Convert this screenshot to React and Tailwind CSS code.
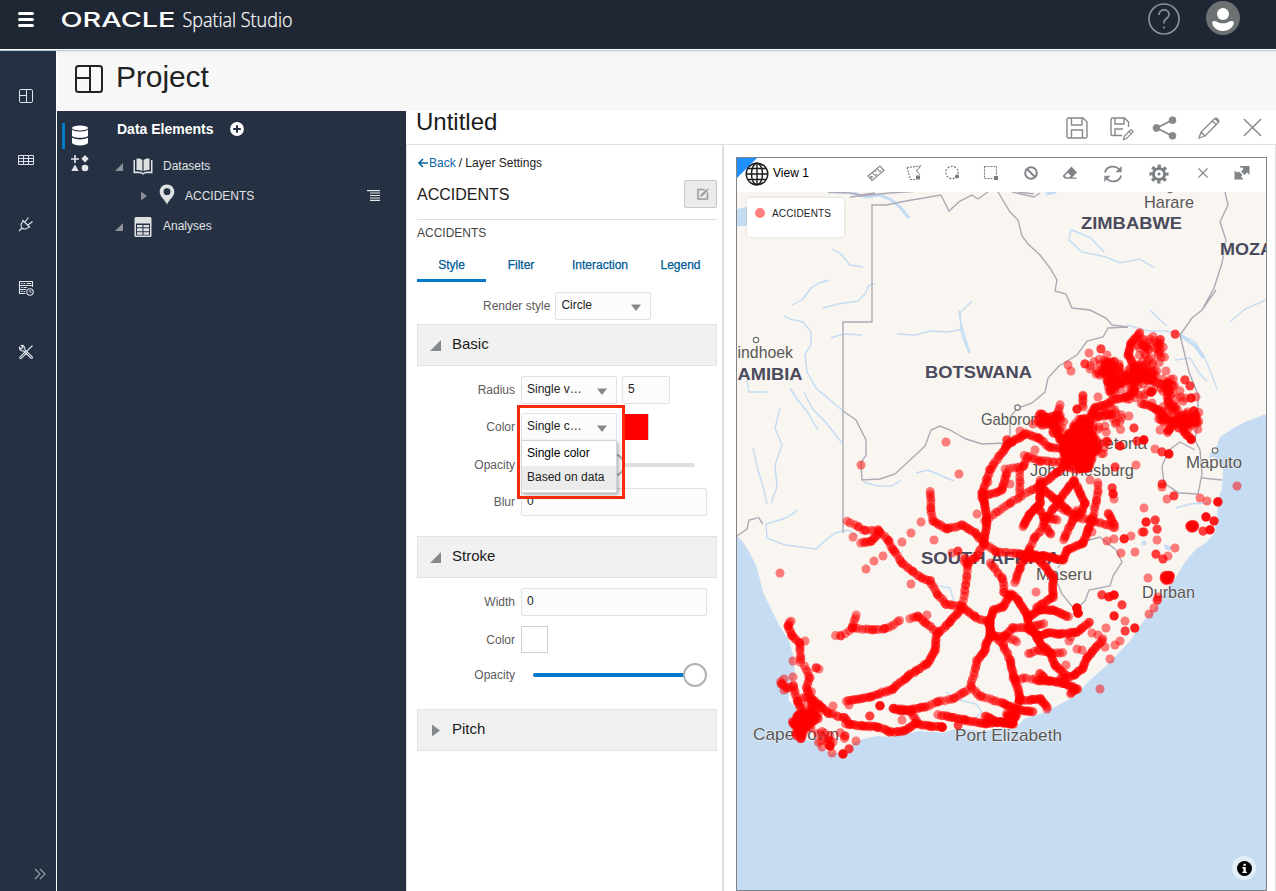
import React from "react";

/* ---------- icons ---------- */

function LayoutIcon({ className, sw }) {
  return (
    <svg viewBox="0 0 28 28" className={className} fill="none" stroke="currentColor" strokeWidth={sw}>
      <rect x="1" y="1" width="26" height="26" rx="2.5" />
      <path d="M15 1V27M1 13H15" />
    </svg>
  );
}

function TableIcon() {
  return (
    <svg viewBox="0 0 16 10" className="h-[10px] w-4" fill="none" stroke="#dfe4ea" strokeWidth="1">
      <path d="M.5 .5H15.500V9.500H.5ZM.5 3.500H15.500M.5 6.500H15.500M5.500 .5V9.500M10.500 .5V9.500" />
    </svg>
  );
}

function PlugIcon() {
  return (
    <svg viewBox="0 0 16 16" className="h-4 w-4" fill="none" stroke="#dfe4ea" strokeWidth="1.1">
      <path d="M1 15L4 12M4 12C2 10 3 7 5.500 5L11 10.500C9 13 6 14 4 12ZM4.500 4L12 11.500M7 6L10.500 1.500M10 9L14.500 5.500" />
    </svg>
  );
}

function ServerClockIcon() {
  return (
    <svg viewBox="0 0 16 16" className="h-4 w-4" fill="none" stroke="#dfe4ea" strokeWidth="1.100">
      <path d="M7.500 13.500H1.500V1.500H14.500V7M1.500 5.500H14.500M1.500 9.500H8" />
      <path d="M3 3.500H4.500M5.500 3.500H7M8.500 3.500H13M3 7.500H4.500M5.500 7.500H9M3 11.500H4.500M5.500 11.500H7" />
      <circle cx="12" cy="12" r="3.2" />
      <path d="M12 10V12.200H13.600" strokeWidth="0.9" />
    </svg>
  );
}

function ToolsIcon() {
  return (
    <svg viewBox="0 0 16 16" className="h-4 w-4" fill="none" stroke="#dfe4ea" strokeWidth="1.1">
      <path d="M14.500 1.500L8.500 7.500M8 7L2 13C1.300 14 2.500 15 3.300 14.300L9 8.600M5.600 6.800L12.800 14C13.800 14.800 15 13.600 14.200 12.800L6.800 5.600C7.300 3.300 5.600 1 3.300 1.500L5 3.300L3.300 5L1.500 3.300C1 5.500 3 7.500 5.600 6.800Z" />
    </svg>
  );
}

function DatabaseIcon() {
  return (
    <svg viewBox="0 0 18 21" className="-mt-0.5 h-[21px] w-[18px]" fill="#fff">
      <ellipse cx="9" cy="3" rx="8" ry="2.600" />
      <path d="M1 4.500C3 7.200 15 7.200 17 4.500V11C15 13.400 3 13.400 1 11Z" />
      <path d="M1 12.600C3 15 15 15 17 12.600V18C15 21.300 3 21.300 1 18Z" />
    </svg>
  );
}

function ShapesIcon() {
  return (
    <svg viewBox="0 0 18 18" className="h-[18px] w-[18px]" fill="#e3e5e8">
      <path d="M3.200 1H4.800V4.200H8V5.800H4.800V9H3.200V5.800H0V4.200H3.200ZM14 1L17.700 4.700L14 8.400L10.300 4.700ZM4 10.500L7.700 17H.3Z" />
      <circle cx="14" cy="14" r="3.3" />
    </svg>
  );
}

function PlusCircle() {
  return (
    <svg viewBox="0 0 14 14" className="h-[14px] w-[14px]">
      <circle cx="7" cy="7" r="6.900" fill="#fff" />
      <path d="M7 3.200V10.800M3.200 7H10.800" stroke="#253142" strokeWidth="2" />
    </svg>
  );
}

function BookIcon() {
  return (
    <svg viewBox="0 0 20 17" className="h-[17px] w-5" fill="#dfe0e2">
      <path d="M3.500 .5C6 .2 8.500 .8 9.400 2V13.200C8 12 5.500 11.800 3.500 12ZM16.500 .5C14 .2 11.500 .8 10.600 2V13.200C12 12 14.500 11.800 16.500 12Z" />
      <path d="M.5 2H2V13.500C5 13.200 8 13.400 10 15C12 13.400 15 13.200 18 13.500V2H19.500V15.200H12.500L10 16.800L7.500 15.200H.5Z" />
    </svg>
  );
}

function PinIcon() {
  return (
    <svg viewBox="0 0 16 21" className="h-[21px] w-4" fill="#dfe0e2">
      <path fillRule="evenodd" d="M8 .5C3.800 .5 .7 3.700 .7 7.700C.7 12.500 5.500 15 8 20.500C10.500 15 15.300 12.500 15.300 7.700C15.300 3.700 12.200 .5 8 .5ZM8 4.300A3.400 3.400 0 1 1 8 11.100A3.400 3.400 0 1 1 8 4.300Z" />
    </svg>
  );
}

function CalcIcon() {
  return (
    <svg viewBox="0 0 18 20" className="h-5 w-[18px]">
      <rect x="0.5" y="0" width="17" height="20" rx="1.500" fill="#dfe0e2" />
      <path d="M2 6.500H16V18.500H2Z" fill="#253142" />
      <path d="M3 8H8.500V10.200H3ZM9.500 8H15V10.200H9.500ZM3 11.200H8.500V14.200H3ZM9.500 11.200H15V14.200H9.500ZM3 15.200H8.500V17.700H3ZM9.500 15.200H15V17.700H9.500Z" fill="#dfe0e2" />
    </svg>
  );
}

function OpenTri({ className, fill }) {
  return (
    <svg viewBox="0 0 10 10" className={className}>
      <path d="M10 0V10H0Z" fill={fill} />
    </svg>
  );
}

function ClosedTri({ className, fill }) {
  return (
    <svg viewBox="0 0 8 12" className={className}>
      <path d="M0 0L8 6L0 12Z" fill={fill} />
    </svg>
  );
}

function Caret() {
  return (
    <svg viewBox="0 0 10 7" className="mt-[2px] h-[7px] w-[10px]">
      <path d="M0 .5H10L5 7Z" fill="#85898c" />
    </svg>
  );
}

function SaveIcon() {
  return (
    <svg viewBox="0 0 22 22" className="h-[22px] w-[22px]" fill="none" stroke="#85898d" strokeWidth="1.400">
      <path d="M2.500 1H17L21 5V19.500Q21 21 19.500 21H2.500Q1 21 1 19.500V2.500Q1 1 2.500 1ZM5.500 1V8H16V1M5.500 21V13H16.500V21" />
    </svg>
  );
}

function SaveAsIcon() {
  return (
    <svg viewBox="0 0 24 24" className="h-6 w-6" fill="none" stroke="#85898d" strokeWidth="1.400">
      <path d="M12 18.500H2.500Q1 18.500 1 17V2.500Q1 1 2.500 1H14.500L18.500 5V10M5 1V7H14V1M5 18.500V12H13" />
      <path d="M13.500 22.500L14.500 19L20.500 13C21.300 12.200 23.600 14.300 22.700 15.200L16.800 21.300ZM19 14.500L21.200 16.700" strokeWidth="1.200" />
    </svg>
  );
}

function ShareIcon() {
  return (
    <svg viewBox="0 0 25 24" className="h-6 w-[25px]" fill="#85898d" stroke="#85898d">
      <path d="M4.500 12L20.500 4M4.500 12L20.500 20" strokeWidth="1.800" />
      <circle cx="4.500" cy="12" r="3.400" />
      <circle cx="20.500" cy="4.200" r="3.400" />
      <circle cx="20.500" cy="19.800" r="3.400" />
    </svg>
  );
}

function PencilIcon() {
  return (
    <svg viewBox="0 0 22 22" className="h-[22px] w-[22px]" fill="none" stroke="#85898d" strokeWidth="1.300">
      <path d="M1 21L3 15L16.500 1.800C18.500 0 22 3.500 20.200 5.500L7 19ZM3 15L7 19M14.500 4L18 7.500M17 1.500L20.500 5" />
    </svg>
  );
}

function CloseIcon({ className, sw }) {
  return (
    <svg viewBox="0 0 20 20" className={className} fill="none" stroke="#85898d" strokeWidth={sw}>
      <path d="M1 1L19 19M19 1L1 19" />
    </svg>
  );
}

function GlobeIcon() {
  return (
    <svg viewBox="0 0 24 24" className="-mt-[2px] h-6 w-6" fill="none" stroke="#1d1d1d" strokeWidth="1.400">
      <circle cx="12" cy="12" r="10.800" />
      <ellipse cx="12" cy="12" rx="5.500" ry="10.800" />
      <path d="M12 1V23M1 12H23M3 6.500H21M3 17.500H21" />
    </svg>
  );
}

function RulerIcon() {
  return (
    <svg viewBox="0 0 18 18" className="h-[18px] w-[18px]" fill="none" stroke="#85898d" strokeWidth="1.200">
      <path d="M1 12L13 2L17 6.500L5 16.500ZM5.500 8.500L7.300 10.700M8 6.500L9.200 8M10.300 4.600L12.100 6.800M12.300 8L14 6.500M7.500 12L10 10" />
      <circle cx="4.500" cy="13" r=".7" />
    </svg>
  );
}

function PolySelectIcon() {
  return (
    <svg viewBox="0 0 16 16" className="h-4 w-4" fill="none" stroke="#777b7e" strokeWidth="1.100">
      <path d="M1 2.500L14.500 1L10.500 6L14 9.500M1 2.500L4.500 14.500H9" strokeDasharray="2 1" />
      <path d="M10 10.500H14V14.500H10Z" fill="#777b7e" stroke="none" />
    </svg>
  );
}

function CircleSelectIcon() {
  return (
    <svg viewBox="0 0 16 16" className="h-4 w-4" fill="none" stroke="#777b7e" strokeWidth="1.200">
      <circle cx="8" cy="7.500" r="6.200" strokeDasharray="2 1.400" />
      <circle cx="13" cy="11.500" r="2.100" fill="#777b7e" stroke="none" />
    </svg>
  );
}

function RectSelectIcon() {
  return (
    <svg viewBox="0 0 16 16" className="h-4 w-4" fill="none" stroke="#777b7e" strokeWidth="1.100">
      <path d="M1.500 1.500H13.500V10M1.500 1.500V13.500H10" strokeDasharray="2 1" />
      <path d="M11 11H15V15H11Z" fill="#777b7e" stroke="none" />
    </svg>
  );
}

function BanIcon() {
  return (
    <svg viewBox="0 0 14 14" className="h-[14px] w-[14px]" fill="none" stroke="#808488" strokeWidth="2">
      <circle cx="7" cy="7" r="5.800" />
      <path d="M3 3L11 11" />
    </svg>
  );
}

function EraserIcon() {
  return (
    <svg viewBox="0 0 16 14" className="h-[14px] w-4" fill="#808488">
      <path d="M9.500 .5L15 6.500L10 11.500H14.500V12.800H3L.5 10Z" />
      <path d="M2.800 9.800L5.800 6.800L8.800 9.700L7.300 11.300H4.200Z" fill="#fff" />
    </svg>
  );
}

function RefreshIcon() {
  return (
    <svg viewBox="0 0 20 18" className="h-[18px] w-5" fill="none" stroke="#85898d" strokeWidth="1.800">
      <path d="M2 7.500C3 1 13 -.5 16.500 5M18 10.500C17 17 7 18.500 3.500 13" />
      <path d="M18.700 1V7.300H12.500ZM1.300 17V10.700H7.500Z" fill="#85898d" stroke="none" />
    </svg>
  );
}

function GearIcon() {
  return (
    <svg viewBox="-10 -10 20 20" className="h-5 w-5" fill="none" stroke="#7c8083">
      <circle r="5.600" strokeWidth="3" />
      <circle r="7.800" strokeWidth="3.600" strokeDasharray="3.060 3.066" strokeDashoffset="1.530" />
      <circle r="1.600" fill="#7c8083" stroke="none" />
    </svg>
  );
}

function ExpandIcon() {
  return (
    <svg viewBox="0 0 16 16" className="h-4 w-4" fill="#808488">
      <path d="M6 1H15.500V10L13 7.500L10.500 10L7 6.500L9.500 4L8.500 2.500H6ZM.5 5.500L3 7.500L5 6.500L8.500 10L7 11.500L9.500 14.500H.5Z" />
    </svg>
  );
}

/* ---------- map data ---------- */

// Each road: [spacing between points, vertices...]
const ROADS = [
  [4.2, "847,521 858,527 866,531 878,530"],
  [3, "878,530 888,540 893,549 902,563 912,571 922,578 930,581 938,595 946,604 961,606"],
  [2.6, "961,606 975,617 990,623"],
  [2.2, "861,543 872,541 879,532"],
  [3.6, "930,491 931,508 933,521"],
  [2.4, "933,521 947,529 962,525 975,533 984,543"],
  [3.2, "984,543 996,552 1020,554"],
  [3.8, "984,543 978,555 968,564 966,585 962,605"],
  [2.2, "962,608 950,622 937,634 935,650 928,663 908,676 893,689 870,697 846,701"],
  [4.5, "836,635 841,636 853,628"],
  [3.2, "856,615 852,628 872,630 885,629 900,621"],
  [3, "910,619 918,616 926,623 936,632"],
  [3, "791,621 788,626 792,636 800,643 801,663"],
  [3.6, "804,666 810,678 806,688 812,700 820,706"],
  [2, "812,698 812,712 802,722"],
  [2, "818,704 828,713"],
  [3, "828,713 845,718 850,724"],
  [2.1, "846,724 862,726 878,727 890,732 905,731 915,724 930,726 942,727"],
  [3, "780,682 787,688 793,685 797,700 802,712"],
  [2.2, "892,708 902,711 925,707"],
  [3.2, "925,707 938,702 955,698 967,690"],
  [3.8, "970,687 976,668 977,660"],
  [2.2, "977,661 985,650 986,643 992,634 988,620"],
  [3.4, "971,687 980,696 1003,703"],
  [1.6, "1003,703 1015,709 1033,712"],
  [3, "893,708 910,711 918,723"],
  [4, "937,715 947,716"],
  [2, "947,716 965,720 985,724 1000,722 1013,724"],
  [1.6, "985,716 998,722 1013,724 1006,714"],
  [3, "994,636 1003,645 1010,660"],
  [2, "1010,660 1015,680 1020,697 1018,704"],
  [3, "1018,700 1030,700"],
  [1.8, "1030,700 1040,699 1047,707"],
  [4, "1013,678 1035,679"],
  [1.6, "1037,681 1050,681 1063,683 1077,689 1070,694"],
  [1.8, "1040,673 1045,680"],
  [2, "1103,639 1087,658 1083,668 1075,675 1060,679"],
  [2, "1028,629 1040,636 1047,633 1060,634 1077,632 1090,622"],
  [2, "1032,630 1040,643 1050,652 1055,665 1065,675"],
  [3.2, "1028,654 1038,650 1050,653 1063,653"],
  [2.6, "990,635 1003,637 1013,628 1030,627 1044,624"],
  [3.2, "1005,636 1017,642"],
  [1.5, "990,620 990,637"],
  [2, "1010,593 1018,600 1027,615 1030,630"],
  [2, "1010,595 1003,607 993,610 990,623"],
  [3, "990,563 1003,579 1004,592 1010,597"],
  [1.8, "1027,618 1040,610 1053,610 1068,617"],
  [2, "1040,560 1053,577 1053,597 1036,608"],
  [1.5, "1020,554 1027,557 1045,556 1063,560"],
  [2.3, "1015,582 1020,568 1027,553"],
  [3.2, "1027,553 1035,538 1044,526"],
  [2, "1044,522 1058,502 1074,480"],
  [1.6, "1023,527 1030,514 1040,503 1040,480"],
  [2.3, "1038,507 1044,517 1057,520"],
  [3, "1051,534 1044,524"],
  [2, "1063,560 1067,550 1083,543 1088,530 1093,517"],
  [3.2, "1093,517 1097,500 1098,483"],
  [2.5, "1063,540 1072,522 1077,510"],
  [3, "1060,508 1077,517 1093,521 1113,527"],
  [2, "1108,513 1115,527"],
  [2, "1040,486 1056,500 1068,510"],
  [2, "1074,480 1085,503 1080,515"],
  [2, "1005,447 1013,441 1025,435"],
  [2.5, "1025,433 1038,438 1050,447 1067,450"],
  [2.6, "1007,445 990,470 982,493"],
  [1.6, "982,492 984,502"],
  [2, "984,500 987,523 984,541"],
  [2.4, "982,497 1002,490 1007,472"],
  [3.4, "1005,469 1023,467 1027,459"],
  [3.4, "1020,470 1020,493"],
  [3.6, "985,521 1010,503 1037,487"],
  [2.2, "1037,487 1057,473 1070,460"],
  [3, "1024,455 1040,461 1067,462"],
  [2, "1043,417 1055,427 1060,440 1075,445"],
  [2.6, "1060,405 1056,418"],
  [2.4, "1083,395 1083,407"],
  [2, "1090,418 1095,408 1110,403"],
  [2.6, "1110,401 1130,396 1135,388"],
  [2, "1095,417 1113,414"],
  [2, "1140,332 1131,344 1128,355"],
  [1.8, "1128,355 1135,368 1137,378"],
  [1.8, "1107,365 1115,382 1110,392"],
  [1.8, "1112,388 1135,375 1152,380"],
  [2.4, "1150,380 1167,386 1168,402 1178,410"],
  [2, "1141,403 1155,408 1162,414 1166,420"],
  [2, "1168,433 1172,422 1184,418"],
  [2, "1182,416 1184,432 1192,440"],
];

// Dense areas: cx, cy, rx, ry, number of points
const CLUSTERS = [
  [1080, 446, 18, 17, 260],
  [1083, 428, 10, 10, 70],
  [1077, 461, 15, 10, 80],
  [803, 722, 11, 9, 75],
  [799, 735, 5, 4, 14],
  [815, 716, 5, 5, 12],
  [807, 704, 10, 14, 14],
  [830, 737, 16, 9, 13],
  [1112, 372, 10, 12, 50],
  [1103, 367, 13, 10, 16],
  [1142, 373, 15, 10, 48],
  [1151, 350, 16, 16, 42],
  [1130, 388, 24, 13, 42],
  [1048, 420, 11, 7, 26],
  [1060, 428, 8, 13, 14],
  [1107, 420, 19, 14, 24],
  [1185, 420, 14, 10, 32],
  [1165, 414, 9, 9, 18],
  [1168, 386, 8, 10, 16],
  [1176, 400, 9, 14, 10],
  [1105, 447, 9, 8, 8],
  [1196, 420, 4, 12, 14],
  [1012, 717, 5, 6, 20],
  [1167, 578, 3.5, 3.5, 18],
  [1192, 526, 3, 2.5, 14],
  [1030, 555, 7, 5, 20],
  [970, 560, 7, 5, 7],
];

// Isolated points: x, y, how many are stacked
const POINTS = [
  [780, 573, 1], [861, 465, 1], [946, 442, 1], [959, 474, 1], [866, 569, 1], [874, 561, 1], [883, 556, 1],
  [902, 542, 1], [911, 533, 1], [921, 522, 1], [911, 584, 1], [934, 540, 1], [927, 615, 1], [853, 537, 1],
  [977, 514, 1], [1010, 484, 1], [988, 482, 1], [1175, 334, 2], [1068, 365, 1], [1071, 371, 1], [1089, 353, 1],
  [1085, 364, 2], [1101, 349, 2], [1107, 355, 1], [1090, 369, 1], [1166, 371, 1], [1185, 380, 2], [1190, 386, 2],
  [1185, 398, 1], [1191, 398, 3], [1196, 397, 1], [1194, 411, 3], [1191, 439, 3], [1168, 430, 2], [1160, 430, 1],
  [1155, 449, 1], [1162, 452, 2], [1169, 454, 4], [1144, 440, 4], [1137, 441, 2], [1120, 446, 3], [1134, 428, 2],
  [1129, 416, 1], [1115, 467, 2], [1136, 465, 1], [1090, 480, 1], [1112, 488, 2], [1113, 494, 3], [1114, 499, 1],
  [1144, 508, 1], [1162, 484, 2], [1162, 487, 1], [1174, 496, 2], [1167, 499, 1], [1200, 498, 1], [1207, 501, 1],
  [1218, 502, 4], [1237, 486, 1], [1206, 517, 4], [1214, 521, 3], [1210, 530, 4], [1203, 531, 2], [1146, 522, 3],
  [1155, 520, 2], [1144, 532, 2], [1142, 532, 1], [1157, 529, 2], [1157, 540, 1], [1124, 539, 3], [1131, 536, 1],
  [1114, 539, 1], [1107, 541, 1], [1121, 553, 1], [1135, 552, 1], [1156, 554, 2], [1163, 559, 2], [1168, 556, 1],
  [1175, 548, 1], [1148, 568 + 10, 1], [1170, 576, 4], [1102, 595, 2], [1109, 597, 3], [1114, 595, 4], [1122, 605, 2],
  [1114, 616, 3], [1125, 621, 1], [1125, 631, 2], [1135, 628, 3], [1106, 628, 1], [1120, 641, 1], [1115, 645, 1],
  [1105, 647, 1], [1110, 659, 1], [1100, 689, 1], [1149, 614, 1], [1154, 608, 1], [1157, 600, 2], [1158, 597, 1],
  [1077, 608, 6], [1078, 613, 6], [1092, 633, 1], [1098, 635, 1], [1069, 641, 1], [1071, 637, 1], [1077, 649, 1],
  [1082, 650, 1], [1066, 665, 1], [1036, 592, 1], [880, 706, 4], [870, 716, 2], [902, 720, 1], [942, 727, 5],
  [958, 725, 2], [793, 661, 1], [793, 677, 1], [784, 679, 1], [805, 641, 1], [816, 668, 2], [819, 669, 1],
  [833, 706, 1], [849, 705, 1], [843, 754, 4], [830, 746, 5], [856, 741, 1], [832, 753, 1], [849, 749, 2],
  [822, 747, 1], [845, 736, 2], [1047, 709, 1], [1035, 450, 1], [1020, 431, 1], [1033, 424, 1], [1040, 414, 2],
  [1077, 409, 3], [1098, 397, 1], [1007, 440, 2], [1152, 403, 1], [1151, 392, 4],
  [1050, 533, 1], [1092, 532, 1], [952, 553, 1], [958, 551, 2], [788, 626, 1], [781, 684, 1], [784, 690, 1],
];

function buildDots() {
  let seed = 7919;
  const rnd = () => {
    seed = (seed * 16807) % 2147483647;
    return seed / 2147483647;
  };
  const out = [];
  for (const [step, text] of ROADS) {
    const pts = text.split(" ").map((p) => p.split(",").map(Number));
    for (let i = 0; i < pts.length - 1; i++) {
      const [x1, y1] = pts[i];
      const [x2, y2] = pts[i + 1];
      const len = Math.hypot(x2 - x1, y2 - y1);
      const n = Math.max(1, Math.round(len / step));
      for (let k = 0; k <= n; k++) {
        const t = Math.min(1, Math.max(0, (k + (rnd() - 0.5) * 0.6) / n));
        out.push([x1 + (x2 - x1) * t + (rnd() - 0.5) * 1.2, y1 + (y2 - y1) * t + (rnd() - 0.5) * 1.2]);
      }
    }
  }
  for (const [cx, cy, rx, ry, n] of CLUSTERS) {
    for (let k = 0; k < n; k++) {
      const a = rnd() * Math.PI * 2;
      const r = Math.sqrt(rnd());
      out.push([cx + Math.cos(a) * r * rx, cy + Math.sin(a) * r * ry]);
    }
  }
  for (const [x, y, n] of POINTS) {
    for (let k = 0; k < n; k++) out.push([x + (k ? (rnd() - 0.5) * 0.8 : 0), y + (k ? (rnd() - 0.5) * 0.8 : 0)]);
  }
  return out;
}

const DOTS = buildDots();

const SEA =
  "M737 536L743 542L750 553L757 568L763 592L772 611L780 627L789 640L793 655L795 675L790 690L788 700L797 708L792 720L794 735L803 741L815 738L822 748L830 753L845 753L853 743L863 739L877 736L890 737L905 734L920 731L943 733L958 728L972 730L985 731L1003 728L1015 729L1024 719L1040 714L1053 708L1075 696L1090 680L1107 665L1130 641L1145 619L1156 606L1166 590L1175 579L1185 562L1196 549L1207 542L1215 532L1217 515L1218 500L1222 488L1223 470L1219 462L1213 456L1216 448L1220 437L1232 429L1245 422L1266 414V891H737Z";

const RIVERS = [
  "M832 249L841 254L850 265L863 267",
  "M829 280L819 283L811 288L803 299L792 305",
  "M823 308L838 304L858 301L865 294L869 285L875 284",
  "M831 338L843 334L862 335",
  "M784 316L790 319L803 322L811 332L811 345L805 354L807 372L816 388L830 400L843 411",
  "M897 334L915 335L930 331L948 332L963 329M972 301L960 313L961 323L965 338L970 353",
  "M790 388L797 399L808 413L818 430M804 392L812 408L828 425L842 443",
  "M780 408L775 428L782 445L775 465L777 487L771 503",
  "M753 448L758 470L764 490L767 504",
  "M747 380L749 392L767 392",
  "M798 510L786 518L766 524L767 538L785 545L816 549L826 540L835 533L848 530L858 536",
  "M863 482L878 486L892 486L901 480",
  "M916 473L928 470L942 476L954 481",
  "M940 586L950 588L954 601",
  "M946 692L960 700L976 704L982 712L974 719",
  "M1127 325L1148 331L1166 331L1180 334M1180 334L1195 342L1205 358L1213 378L1217 389",
  "M1150 310L1158 318L1167 326M1175 360L1190 358L1200 374L1207 381",
  "M959 310L962 335L969 353M1176 508L1190 504L1208 503",
  "M1071 229L1069 240L1082 252L1106 257L1120 263L1139 259L1155 268M1072 230L1091 238L1104 252",
  "M1230 322L1245 309L1266 300",
];

const BORDERS = [
  "M843 533V322H872V205L886 205L906 201L941 195L949 211L960 201L972 195L978 199L988 192",
  "M998 192L1010 212L1018 220L1022 236L1028 244L1040 255L1050 268L1057 280L1055 291L1066 294L1072 308L1090 310L1106 318L1112 325L1128 327",
  "M1128 327L1108 328L1103 337L1087 341L1077 355L1059 366L1048 378L1045 392L1032 403L1018 408L1010 417V435L1005 443L982 444L966 439L950 430",
  "M950 430L940 426L931 430L925 446L910 460L895 474L880 479L862 480L861 463L866 455L866 440L856 420L843 411",
  "M1180 335L1192 318L1202 310L1216 290M1225 192L1228 205L1220 222L1226 240L1222 263L1214 288L1202 310",
  "M1180 335L1189 372L1198 395L1198 422L1195 440L1200 450L1202 474L1198 494L1179 493L1164 483L1162 466L1169 450L1180 442L1195 450M1202 478L1222 480",
  "M1058 568L1068 552L1086 541L1100 537L1116 550L1122 562L1113 576L1110 586L1089 590L1085 601L1075 610L1062 594L1056 580L1046 562",
  "M737 536L747 529L749 520L757 518M758 517L763 524",
  "M828 192L849 193L860 195L875 193M1012 192L1034 197L1040 193M850 197L890 193L935 190M1018 192L1034 194",
];

const LABELS = [
  [1144, 207.5, "Harare", 50, false],
  [1081, 228.5, "ZIMBABWE", 101, true],
  [1220, 254.5, "MOZA", 53, true],
  [737.5, 357.5, "indhoek", 55.5, false],
  [737.5, 379.5, "AMIBIA", 65, true],
  [925, 377.5, "BOTSWANA", 107, true],
  [981, 424.5, "Gaborone", 66, false],
  [1087, 448.5, "Pretoria", 60, false],
  [1030, 475.5, "Johannesburg", 104, false],
  [1186, 467.5, "Maputo", 56, false],
  [921, 563.5, "SOUTH AFRICA", 139, true],
  [1036, 579.5, "Maseru", 56, false],
  [1142, 598, "Durban", 53, false],
  [753, 740, "Cape Town", 86, false],
  [955, 741, "Port Elizabeth", 107, false],
];

function MapCanvas() {
  return (
    <svg viewBox="737 192 529 698" className="block h-[698px] w-[529px]" fontFamily="'Liberation Sans', Arial, sans-serif">
      <rect x="737" y="192" width="529" height="698" fill="#f9f6f1" />
      <path d={SEA} fill="#c5dcf2" />
      <path d="M737 209L747 207V226H737Z" fill="#c5dcf2" />
      <g fill="none" stroke="#c3dcf3" strokeWidth="1.400">
        {RIVERS.map((d) => <path key={d} d={d} />)}
        <path d="M829 192H850L866 197L880 195L890 199L900 207L909 218M1046 194L1056 192M1180 335L1195 346L1204 358" strokeWidth="3" />
      </g>
      <g fill="#c5dcf2">
        <circle cx="1144" cy="543" r="2.500" />
        <path d="M1164 544L1172 547L1170 551L1165 549ZM1210 453L1215 450L1214 457L1209 458Z" />
      </g>
      <g fill="none" stroke="#aeaab5" strokeWidth="1.400">
        {BORDERS.map((d) => <path key={d} d={d} />)}
      </g>
      <g fill="#fff" stroke="#727270" strokeWidth="1.200">
        <circle cx="756" cy="340" r="2.700" />
        <circle cx="1017.500" cy="407.500" r="2.700" />
        <circle cx="1215" cy="450.500" r="2.700" />
        <circle cx="1170" cy="190" r="2.700" />
      </g>
      {LABELS.map(([x, y, text, w, bold]) => (
        <text
          key={text}
          x={x}
          y={y}
          textLength={w}
          lengthAdjust="spacingAndGlyphs"
          fontSize={17}
          fontWeight={bold ? 700 : 400}
          fill={bold ? "#4a4a5c" : "#585858"}
          stroke="#f9f6f1"
          strokeOpacity=".6"
          strokeWidth="1.500"
          paintOrder="stroke"
        >
          {text}
        </text>
      ))}
      <g fill="#ff0000" fillOpacity=".5">
        {DOTS.map(([x, y], i) => <circle key={i} cx={x} cy={y} r="4.500" />)}
      </g>
    </svg>
  );
}

/* ---------- settings form ---------- */

function Row({ label, className, children }) {
  return (
    <div className={"flex items-center " + className}>
      <div className="w-[98px] shrink-0 text-right text-[12px] text-[#5b5b5b]">{label}</div>
      <div className="relative ml-[6px] flex flex-1 items-center">{children}</div>
    </div>
  );
}

function Select({ value }) {
  return (
    <div className="flex h-7 w-24 items-center justify-between rounded-[2px] border border-[#dfe1e2] bg-[#fcfcfc] pl-[5px] pr-[9px]">
      <span className="-mt-0.5 text-[12px] text-[#222]">{value}</span>
      <Caret />
    </div>
  );
}

function TextField({ value, className }) {
  return (
    <div className={"flex h-7 items-center rounded-[2px] border border-[#dfe1e2] bg-[#fcfcfc] pl-[5px] " + className}>
      <span className="-mt-0.5 text-[12px] text-[#222]">{value}</span>
    </div>
  );
}

function Section({ title, open, className }) {
  return (
    <div className={"flex h-[42px] items-center border border-[#e0e2e3] bg-[#f1f1f1] pl-[11px] " + className}>
      <div className="flex w-[23px]">
        {open ? (
          <OpenTri className="ml-px h-[11px] w-[11px]" fill="#85898c" />
        ) : (
          <ClosedTri className="ml-[3px] h-[13px] w-2" fill="#85898c" />
        )}
      </div>
      <span className="-mt-0.5 text-[15px] text-[#1b1b1b]">{title}</span>
    </div>
  );
}

function SettingsPanel() {
  return (
    <section className="h-[747px] w-[318px] shrink-0 border-r-2 border-l border-[#dedede] bg-white pr-[5px] pl-[10px]">
      <div className="flex h-[35px] items-center text-[12px] text-[#1b1b1b]">
        <svg viewBox="0 0 10 10" className="mr-px ml-px h-[10px] w-[10px]" fill="none" stroke="#0a67a3" strokeWidth="1.600">
          <path d="M10 5H1.500M5 1L1 5L5 9" />
        </svg>
        <span className="text-[#0a67a3]">Back</span>
        <span className="ml-[3px]">/ Layer Settings</span>
      </div>
      <div className="flex h-[40px] items-start justify-between border-b border-[#dedede]">
        <h2 className="mt-[1px] text-[16px] leading-7 text-[#1b1b1b]">ACCIDENTS</h2>
        <div className="flex h-7 w-[33px] items-center justify-center rounded-[2px] border border-[#c6c8ca] bg-[#ebebeb] pl-[5px]">
          <svg viewBox="0 0 12 12" className="h-3 w-3" fill="none" stroke="#989a9c" strokeWidth="1.500">
            <path d="M7.500 1.500H1V11H10.500V4.500" />
            <path d="M3.500 8.500L4 6.800L9.300 1.500L10.500 2.700L5.200 8Z" fill="#989a9c" strokeWidth=".6" />
            <path d="M10.500 .8L11.300 1.600" />
          </svg>
        </div>
      </div>
      <div className="flex h-[27px] items-center pb-[2px] text-[12px] text-[#444]">ACCIDENTS</div>
      <div className="flex h-[35px] text-[12px] text-[#005a96] [-webkit-text-stroke:0.250px_#005a96]">
        <div className="w-[69px] border-b-3 border-[#007ac8] pt-[9px] text-center">Style</div>
        <div className="w-[70px] pt-[9px] text-center">Filter</div>
        <div className="w-[88px] pt-[9px] text-center">Interaction</div>
        <div className="w-[73px] pt-[9px] text-center">Legend</div>
      </div>
      <div className="mt-[10px] flex h-7 items-center gap-[5px] pl-[66px]">
        <span className="text-[12px] text-[#5b5b5b]">Render style</span>
        <Select value="Circle" />
      </div>
      <Section title="Basic" open className="mt-1" />
      <Row label="Radius" className="mt-[10px] h-7">
        <Select value="Single v…" />
        <TextField value="5" className="ml-[5px] w-12" />
      </Row>
      <Row label="Color" className="mt-[9px] h-7">
        <Select value="Single c…" />
        <div className="ml-[5px] h-[26px] w-[27px] border-r border-[#ccc] bg-[#ff0000]" />
        <div className="absolute top-[27px] left-0 z-10 w-24 border border-[#d2d4d6] bg-white pb-[2px] text-[12px] text-[#222] shadow-[2px_2px_4px_rgba(0,0,0,0.3)]">
          <div className="flex h-[25px] items-center pb-[2px] pl-[5px] text-black">Single color</div>
          <div className="flex h-6 items-center bg-[#ececec] pb-[2px] pl-[5px]">Based on data</div>
        </div>
        <div className="absolute -top-[8px] -left-1 z-20 h-[94px] w-[108px] border-[3px] border-[#fb2b0b]" />
      </Row>
      <Row label="Opacity" className="mt-[10px] h-7">
        <div className="ml-3 h-1 w-[162px] rounded-sm bg-[#dedfdf]" />
        <div className="absolute left-[80px] h-6 w-6 rounded-full border-2 border-[#b0b2b4] bg-white" />
      </Row>
      <Row label="Blur" className="mt-[9px] h-7">
        <TextField value="0" className="w-[186px]" />
      </Row>
      <Section title="Stroke" open className="mt-5" />
      <Row label="Width" className="mt-[10px] h-7">
        <TextField value="0" className="w-[186px]" />
      </Row>
      <Row label="Color" className="mt-[10px] h-[27px]">
        <div className="h-[27px] w-[27px] border border-[#cfcfcf] bg-white" />
      </Row>
      <Row label="Opacity" className="mt-[8px] h-7">
        <div className="ml-3 h-1 w-[162px] rounded-sm bg-[#007ac8]" />
        <div className="absolute left-[162px] h-6 w-6 rounded-full border-2 border-[#b0b2b4] bg-white" />
      </Row>
      <Section title="Pitch" className="mt-5" />
    </section>
  );
}

function ViewPanel() {
  return (
    <section className="relative mt-3 ml-3 h-[734px] w-[531px] shrink-0 border border-[#808284] bg-white">
      <svg viewBox="0 0 20 20" className="absolute top-0 left-0 h-5 w-5">
        <path d="M0 0H20L0 20Z" fill="#1e90ff" />
      </svg>
      <header className="relative flex h-[34px] items-center pl-[8px]">
        <GlobeIcon />
        <span className="-mt-1 ml-[4px] w-[84px] text-[12px] text-black">View 1</span>
        <div className="-mt-1 flex items-center">
          <div className="flex w-[38px] justify-center"><RulerIcon /></div>
          <div className="flex w-[38px] justify-center"><PolySelectIcon /></div>
          <div className="flex w-[38px] justify-center"><CircleSelectIcon /></div>
          <div className="flex w-[40px] justify-center"><RectSelectIcon /></div>
          <div className="flex w-[39px] justify-center"><BanIcon /></div>
          <div className="flex w-[39px] justify-center"><EraserIcon /></div>
          <div className="mt-[2px] flex w-[47px] justify-center"><RefreshIcon /></div>
          <div className="mt-[2px] flex w-[46px] justify-center"><GearIcon /></div>
          <div className="flex w-[41px] justify-center"><CloseIcon className="h-[10px] w-[10px]" sw="2.400" /></div>
          <div className="flex w-[38px] justify-center"><ExpandIcon /></div>
        </div>
      </header>
      <MapCanvas />
      <div className="absolute top-[40px] left-[10px] flex h-[39px] w-[97px] rounded-[3px] bg-white pt-[9px] pl-2 shadow-[0_0_3px_rgba(0,0,0,0.15)]">
        <div className="mt-px h-[10px] w-[10px] rounded-full bg-[#ff8080]" />
        <span className="mt-px ml-[7px] text-[10px] leading-3 tracking-[0.150px] text-[#222]">ACCIDENTS</span>
      </div>
      <div className="absolute right-[10px] bottom-[10px] flex h-6 w-6 items-center justify-center rounded-full bg-[#e4eef8]">
        <svg viewBox="0 0 14 14" className="h-[15px] w-[15px]">
          <circle cx="7" cy="7" r="7" fill="#000" />
          <path d="M6 2.500H8.200V4.500H6ZM5 5.700H8.200V10H9.200V11.300H5V10H6V7H5Z" fill="#fff" />
        </svg>
      </div>
    </section>
  );
}

function DataElements() {
  return (
    <aside className="flex h-[780px] w-[349px] shrink-0 bg-[#253142]">
      <div className="flex w-[33px] flex-col items-end">
        <div className="mt-3 flex h-[26px] w-7 items-center border-l-3 border-[#007ac8] pl-[6px]">
          <DatabaseIcon />
        </div>
        <div className="mt-[5px] mr-px"><ShapesIcon /></div>
      </div>
      <div className="flex-1 pl-[25px] text-[12px] text-[#e0e2e5]">
        <div className="mt-[10px] flex h-4 items-center pl-[2px] text-[14px] font-bold text-white">
          Data Elements
          <div className="ml-[17px]"><PlusCircle /></div>
        </div>
        <div className="mt-[14px] flex h-[30px] items-center">
          <OpenTri className="mt-0.5 h-2 w-2" fill="#8b9096" />
          <div className="mr-[10px] ml-[10px]"><BookIcon /></div>
          Datasets
        </div>
        <div className="flex h-[30px] items-center pl-[26px]">
          <ClosedTri className="h-3 w-1.5" fill="#8b9096" />
          <div className="mr-[10px] ml-[12px] -mt-1"><PinIcon /></div>
          ACCIDENTS
          <svg viewBox="0 0 13 11" className="-mt-0.5 mr-[26px] ml-auto h-[11px] w-[13px]" stroke="#e8e8e8" strokeWidth="1.200">
            <path d="M0 .6H13M3 3H13M3 5.500H13M3 8H13M3 10.400H13" />
          </svg>
        </div>
        <div className="flex h-[30px] items-center">
          <OpenTri className="mt-0.5 h-2 w-2" fill="#8b9096" />
          <div className="mr-[11px] ml-[11px] mt-0.5"><CalcIcon /></div>
          Analyses
        </div>
      </div>
    </aside>
  );
}

export default function App() {
  return (
    <div className="flex h-[891px] w-[1276px] flex-col overflow-hidden bg-white font-['Liberation_Sans',Arial,sans-serif]">
      <header className="flex h-[49px] shrink-0 items-start bg-[#1e2733]">
        <div className="mt-3 ml-[18px] flex w-4 flex-col gap-[3px]">
          <div className="h-[3px] rounded-sm bg-white" />
          <div className="h-[3px] rounded-sm bg-white" />
          <div className="h-[3px] rounded-sm bg-white" />
        </div>
        <svg viewBox="0 0 240 34" className="ml-[26px] mt-1 h-[34px] w-60" fill="#fff">
          <text x="0.500" y="22.700" fontFamily="Inter, sans-serif" fontWeight="500" fontSize="20" textLength="115" lengthAdjust="spacingAndGlyphs">ORACLE</text>
          <text x="122.500" y="22.700" fontFamily="'Open Sans', sans-serif" fontWeight="300" fontSize="20.500" textLength="110" lengthAdjust="spacingAndGlyphs" stroke="#fff" strokeWidth=".25">Spatial Studio</text>
        </svg>
        <div className="mr-[36px] ml-auto flex gap-[26px]">
          <svg viewBox="0 0 32 32" className="mt-[3px] h-8 w-8" fill="none" stroke="#8b9094" strokeWidth="1.700">
            <circle cx="16" cy="16" r="15" />
            <path d="M11 12C11 5 21 5.500 21 11.500C21 15.500 16 15.500 16 19.500V20.500M16 23.500V25.500" />
          </svg>
          <svg viewBox="0 0 34 34" className="mt-[1px] h-[34px] w-[34px]">
            <circle cx="17" cy="17" r="17" fill="#6c7174" />
            <circle cx="17" cy="13" r="6" fill="#fff" />
            <path d="M6.500 20.500C8 19.500 10 20 11.500 21C14 22.700 20 22.700 22.500 21C24 20 26 19.500 27.500 20.500C29 25 23 30 17 30C11 30 5 25 6.500 20.500Z" fill="#fff" />
          </svg>
        </div>
      </header>
      <div className="h-[2px] shrink-0 border-b border-[#a3cde6] bg-white" />
      <div className="flex flex-1">
        <nav className="flex w-14 shrink-0 flex-col items-center bg-[#253142] pr-[4px] text-[#dfe4ea]">
          <div className="mt-[38px] flex h-[14px] items-center"><LayoutIcon className="h-[14px] w-[14px]" sw="2" /></div>
          <div className="mt-[52px]"><TableIcon /></div>
          <div className="mt-[51px]"><PlugIcon /></div>
          <div className="mt-[48px]"><ServerClockIcon /></div>
          <div className="mt-[48px]"><ToolsIcon /></div>
          <svg viewBox="0 0 12 12" className="mt-auto mb-[12px] ml-7 h-3 w-3" fill="none" stroke="#9aa1aa" strokeWidth="1.100">
            <path d="M1 1L6 6L1 11M6 1L11 6L6 11" />
          </svg>
        </nav>
        <div className="ml-px flex-1">
          <div className="flex h-[60px] items-start bg-gradient-to-b from-[#eeeeee] via-[#f8f8f8] via-10% to-[#f8f8f8] pl-[18px] text-[#222]">
            <div className="mt-[14px]"><LayoutIcon className="h-7 w-7" sw="2" /></div>
            <h1 className="mt-1 ml-[13px] text-[30px] leading-[44px] tracking-[-0.100px]">Project</h1>
          </div>
          <div className="flex">
            <DataElements />
            <main className="w-[870px]">
              <div className="flex h-[34px] items-start justify-between border-b border-[#dedede] pl-[10px]">
                <h2 className="-mt-0.5 text-[24px] leading-[26px] text-[#1b1b1b]">Untitled</h2>
                <div className="flex h-[33px] items-center pr-[14px]">
                  <SaveIcon />
                  <div className="mt-[2px] ml-[22px]"><SaveAsIcon /></div>
                  <div className="ml-[18px]"><ShareIcon /></div>
                  <div className="ml-[21px]"><PencilIcon /></div>
                  <div className="ml-[23px]"><CloseIcon className="h-[19px] w-[19px]" sw="1.500" /></div>
                </div>
              </div>
              <div className="flex w-[870px] border-r border-[#dedede]">
                <SettingsPanel />
                <ViewPanel />
              </div>
            </main>
          </div>
        </div>
      </div>
    </div>
  );
}
